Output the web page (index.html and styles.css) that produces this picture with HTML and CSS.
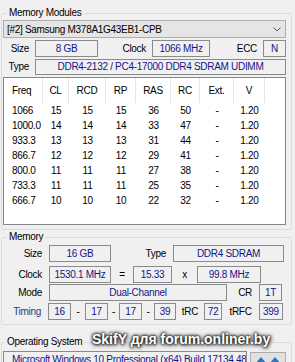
FILE: index.html
```html
<!DOCTYPE html>
<html lang="en">
<head>
  <meta charset="UTF-8">
  <title>SPD</title>
  <link rel="stylesheet" href="styles.css">
</head>
<body>
  <!-- Memory Modules -->
  <div class="group modules">
    <div class="legend">Memory Modules</div>
    <div class="select">
      <span>[#2] Samsung M378A1G43EB1-CPB</span>
      <svg width="8" height="5" viewBox="0 0 8 5"><polyline points="0.5,0.5 4,4 7.5,0.5" fill="none" stroke="#5a5a5a" stroke-width="1"/></svg>
    </div>
    <div class="row mm-size">
      <span class="lbl">Size</span><span class="box">8 GB</span>
      <span class="lbl">Clock</span><span class="box">1066 MHz</span>
      <span class="lbl">ECC</span><span class="box">N</span>
    </div>
    <div class="row mm-type">
      <span class="lbl">Type</span><span class="box">DDR4-2132 / PC4-17000 DDR4 SDRAM UDIMM</span>
    </div>
    <div class="spd">
      <div class="spd-head">
        <span class="freq">Freq</span><span>CL</span><span>RCD</span><span>RP</span><span>RAS</span><span>RC</span><span>Ext.</span><span>V</span>
      </div>
      <div class="spd-row"><span class="freq">1066</span><span>15</span><span>15</span><span>15</span><span>36</span><span>50</span><span>-</span><span>1.20</span></div>
      <div class="spd-row"><span class="freq">1000.0</span><span>14</span><span>14</span><span>14</span><span>33</span><span>47</span><span>-</span><span>1.20</span></div>
      <div class="spd-row"><span class="freq">933.3</span><span>13</span><span>13</span><span>13</span><span>31</span><span>44</span><span>-</span><span>1.20</span></div>
      <div class="spd-row"><span class="freq">866.7</span><span>12</span><span>12</span><span>12</span><span>29</span><span>41</span><span>-</span><span>1.20</span></div>
      <div class="spd-row"><span class="freq">800.0</span><span>11</span><span>11</span><span>11</span><span>27</span><span>38</span><span>-</span><span>1.20</span></div>
      <div class="spd-row"><span class="freq">733.3</span><span>11</span><span>11</span><span>11</span><span>25</span><span>35</span><span>-</span><span>1.20</span></div>
      <div class="spd-row"><span class="freq">666.7</span><span>10</span><span>10</span><span>10</span><span>22</span><span>32</span><span>-</span><span>1.20</span></div>
    </div>
  </div>

  <!-- Memory -->
  <div class="group memory">
    <div class="legend">Memory</div>
    <div class="row m-size">
      <span class="lbl">Size</span><span class="box">16 GB</span>
      <span class="lbl">Type</span><span class="box">DDR4 SDRAM</span>
    </div>
    <div class="row m-clock">
      <span class="lbl">Clock</span><span class="box">1530.1 MHz</span>
      <span class="sep">=</span><span class="box">15.33</span>
      <span class="sep">x</span><span class="box">99.8 MHz</span>
    </div>
    <div class="row m-mode">
      <span class="lbl">Mode</span><span class="box">Dual-Channel</span>
      <span class="lbl">CR</span><span class="box">1T</span>
    </div>
    <div class="row m-timing">
      <span class="lbl timing">Timing</span><span class="box">16</span>
      <span class="sep">-</span><span class="box">17</span>
      <span class="sep">-</span><span class="box">17</span>
      <span class="sep">-</span><span class="box">39</span>
      <span class="sep">tRC</span><span class="box">72</span>
      <span class="sep">tRFC</span><span class="box">399</span>
    </div>
  </div>

  <!-- Operating System -->
  <div class="group os">
    <div class="legend">Operating System</div>
    <div class="os-row">
      <div class="os-box">Microsoft Windows 10 Professional (x64) Build 17134.48</div>
      <div class="os-btn">
        <svg width="28" height="10" viewBox="0 0 28 10"><polygon points="0,9 6,2 12,9" fill="#2b74c9"/><polygon points="14,9 20,2 26,9" fill="#2b74c9"/></svg>
      </div>
    </div>
  </div>

  <div class="watermark">SkifY для forum.onliner.by</div>
</body>
</html>
```

FILE: styles.css
```css
html, body {
  margin: 0;
  height: 362px;
  overflow: hidden;
}
body {
  position: relative;
  background: #f0f0f0;
  font-family: "Liberation Sans", Arial, sans-serif;
  font-size: 10px;
  letter-spacing: -0.3px;
  color: #000;
}
.group {
  border: 1px solid #dcdcdc;
  border-radius: 2px;
  margin: 0 3px 0 1px;
  padding: 0 5px 0 1px;
  box-sizing: border-box;
}
.modules {
  margin-top: 13px;
  height: 217px;
}
.memory {
  margin-top: 7px;
  height: 88px;
}
.os {
  margin-top: 17px;
  height: 60px;
}
.legend {
  margin: -7px 0 0 4px;
  padding: 0 2px;
  width: fit-content;
  background: #f0f0f0;
  line-height: 12px;
}
.os .legend {
  margin-left: 2px;
}
.select {
  margin-top: 1px;
  height: 18px;
  box-sizing: border-box;
  border: 1px solid #adadad;
  background: #e5e5e5;
  display: flex;
  align-items: center;
  justify-content: space-between;
  padding: 0 4px 0 3px;
}
.select svg {
  display: block;
}
.row {
  display: grid;
  height: 17px;
  margin-top: 2px;
}
.lbl {
  text-align: right;
  padding-right: 6px;
  line-height: 17px;
  white-space: nowrap;
}
.lbl.timing {
  color: #253d7c;
}
.sep {
  text-align: center;
  line-height: 17px;
  white-space: nowrap;
}
.box {
  border: 1px solid #8a8a8a;
  line-height: 15px;
  text-align: center;
  color: #15158a;
  white-space: nowrap;
  overflow: hidden;
}
.mm-size {
  grid-template-columns: 32px 63px 54px 58px 53px 23px;
}
.mm-type {
  grid-template-columns: 32px 251px;
  height: 16px;
}
.mm-type .lbl {
  line-height: 16px;
}
.mm-type .box {
  line-height: 14px;
}
.spd {
  margin-top: 2px;
  height: 148px;
  box-sizing: border-box;
  border: 1px solid #828790;
  background: #fff;
}
.spd-head,
.spd-row {
  display: grid;
  grid-template-columns: 39px 26px 37px 30px 35px 29px 34px 31px;
}
.spd-head span {
  line-height: 25px;
  text-align: center;
  border-right: 1px solid #e5e5e5;
}
.spd-row span {
  line-height: 15px;
  text-align: center;
}
.spd .freq {
  text-align: left;
  padding-left: 8px;
}
/* Memory */
.m-size {
  grid-template-columns: 46px 62px 62px 111px;
}
.m-clock {
  grid-template-columns: 46px 62px 22px 39px 25px 64px;
  margin-top: 4px;
}
.m-mode {
  grid-template-columns: 46px 178px 32px 23px;
  margin-top: 1px;
}
.m-timing {
  grid-template-columns: 45px 23px 14px 23px 11px 23px 12px 22px 28px 18px 37px 24px;
}
.memory .lbl {
  padding-right: 7px;
}
/* Operating System */
.os-row {
  display: flex;
  margin-top: 3px;
}
.os-box {
  width: 247px;
  height: 18px;
  box-sizing: border-box;
  border: 1px solid #8a8a8a;
  padding-left: 8px;
  line-height: 16px;
  color: #15158a;
  white-space: nowrap;
  overflow: hidden;
}
.os-btn {
  width: 36px;
  height: 18px;
  box-sizing: border-box;
  margin: 1px 0 0 3px;
  border: 1px solid #adadad;
  background: #e1e1e1;
  padding: 2px 0 0 4px;
}
.os-btn svg {
  display: block;
}
.watermark {
  position: absolute;
  left: 92px;
  top: 331px;
  font-size: 14px;
  font-weight: bold;
  letter-spacing: 0;
  color: #fff;
  white-space: nowrap;
  text-shadow: 0 0 2px #111, 0 0 3px #222, 0 0 4px #333, 1px 1px 4px #444;
}
```
